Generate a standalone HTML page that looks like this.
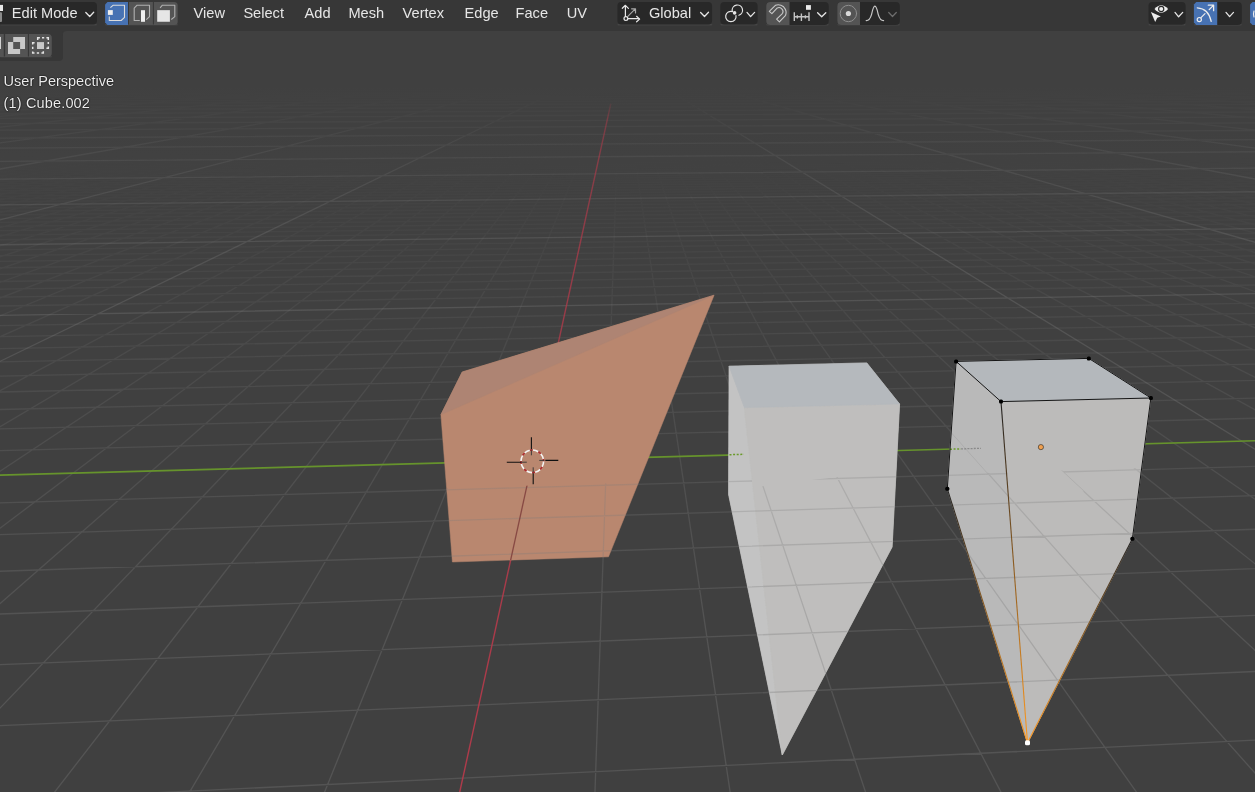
<!DOCTYPE html><html><head><meta charset="utf-8"><style>
html,body{margin:0;padding:0;}
body{width:1255px;height:792px;overflow:hidden;background:#404040;position:relative;font-family:"Liberation Sans",sans-serif;}
#vp{position:absolute;left:0;top:0;}
#hdr{position:absolute;left:0;top:0;width:1255px;height:31px;background:#373737;}
.t{position:absolute;color:#e6e6e6;font-size:14.6px;line-height:14px;white-space:nowrap;transform:translateZ(0);}
#tp{position:absolute;left:0;top:31px;width:63px;height:30px;background:#373737;border-bottom-right-radius:4px;}
.ovl{font-size:14.5px;text-shadow:0 0 1.5px #000,0 0 1px #000;color:#ececec;}

</style></head><body><svg id="vp" width="1255" height="792" viewBox="0 0 1255 792"><defs><linearGradient id="gmin" gradientUnits="userSpaceOnUse" x1="0" y1="40" x2="0" y2="800"><stop offset="0.0000" stop-color="#7a7a7a" stop-opacity="0.000"/><stop offset="0.0066" stop-color="#7a7a7a" stop-opacity="0.000"/><stop offset="0.0132" stop-color="#7a7a7a" stop-opacity="0.000"/><stop offset="0.0197" stop-color="#7a7a7a" stop-opacity="0.000"/><stop offset="0.0263" stop-color="#7a7a7a" stop-opacity="0.000"/><stop offset="0.0329" stop-color="#7a7a7a" stop-opacity="0.000"/><stop offset="0.0395" stop-color="#7a7a7a" stop-opacity="0.000"/><stop offset="0.0461" stop-color="#7a7a7a" stop-opacity="0.000"/><stop offset="0.0526" stop-color="#7a7a7a" stop-opacity="0.000"/><stop offset="0.0592" stop-color="#7a7a7a" stop-opacity="0.000"/><stop offset="0.0658" stop-color="#7a7a7a" stop-opacity="0.000"/><stop offset="0.0724" stop-color="#7a7a7a" stop-opacity="0.000"/><stop offset="0.0789" stop-color="#7a7a7a" stop-opacity="0.000"/><stop offset="0.0855" stop-color="#7a7a7a" stop-opacity="0.000"/><stop offset="0.0921" stop-color="#7a7a7a" stop-opacity="0.000"/><stop offset="0.0987" stop-color="#7a7a7a" stop-opacity="0.000"/><stop offset="0.1053" stop-color="#7a7a7a" stop-opacity="0.000"/><stop offset="0.1118" stop-color="#7a7a7a" stop-opacity="0.000"/><stop offset="0.1184" stop-color="#7a7a7a" stop-opacity="0.000"/><stop offset="0.1250" stop-color="#7a7a7a" stop-opacity="0.003"/><stop offset="0.1316" stop-color="#7a7a7a" stop-opacity="0.007"/><stop offset="0.1382" stop-color="#7a7a7a" stop-opacity="0.010"/><stop offset="0.1447" stop-color="#7a7a7a" stop-opacity="0.014"/><stop offset="0.1513" stop-color="#7a7a7a" stop-opacity="0.017"/><stop offset="0.1579" stop-color="#7a7a7a" stop-opacity="0.020"/><stop offset="0.1645" stop-color="#7a7a7a" stop-opacity="0.024"/><stop offset="0.1711" stop-color="#7a7a7a" stop-opacity="0.027"/><stop offset="0.1776" stop-color="#7a7a7a" stop-opacity="0.031"/><stop offset="0.1842" stop-color="#7a7a7a" stop-opacity="0.035"/><stop offset="0.1908" stop-color="#7a7a7a" stop-opacity="0.039"/><stop offset="0.1974" stop-color="#7a7a7a" stop-opacity="0.043"/><stop offset="0.2039" stop-color="#7a7a7a" stop-opacity="0.047"/><stop offset="0.2105" stop-color="#7a7a7a" stop-opacity="0.051"/><stop offset="0.2171" stop-color="#7a7a7a" stop-opacity="0.056"/><stop offset="0.2237" stop-color="#7a7a7a" stop-opacity="0.061"/><stop offset="0.2303" stop-color="#7a7a7a" stop-opacity="0.066"/><stop offset="0.2368" stop-color="#7a7a7a" stop-opacity="0.071"/><stop offset="0.2434" stop-color="#7a7a7a" stop-opacity="0.077"/><stop offset="0.2500" stop-color="#7a7a7a" stop-opacity="0.082"/><stop offset="0.2566" stop-color="#7a7a7a" stop-opacity="0.087"/><stop offset="0.2632" stop-color="#7a7a7a" stop-opacity="0.092"/><stop offset="0.2697" stop-color="#7a7a7a" stop-opacity="0.096"/><stop offset="0.2763" stop-color="#7a7a7a" stop-opacity="0.100"/><stop offset="0.2829" stop-color="#7a7a7a" stop-opacity="0.105"/><stop offset="0.2895" stop-color="#7a7a7a" stop-opacity="0.109"/><stop offset="0.2961" stop-color="#7a7a7a" stop-opacity="0.113"/><stop offset="0.3026" stop-color="#7a7a7a" stop-opacity="0.117"/><stop offset="0.3092" stop-color="#7a7a7a" stop-opacity="0.122"/><stop offset="0.3158" stop-color="#7a7a7a" stop-opacity="0.126"/><stop offset="0.3224" stop-color="#7a7a7a" stop-opacity="0.130"/><stop offset="0.3289" stop-color="#7a7a7a" stop-opacity="0.134"/><stop offset="0.3355" stop-color="#7a7a7a" stop-opacity="0.139"/><stop offset="0.3421" stop-color="#7a7a7a" stop-opacity="0.143"/><stop offset="0.3487" stop-color="#7a7a7a" stop-opacity="0.146"/><stop offset="0.3553" stop-color="#7a7a7a" stop-opacity="0.150"/><stop offset="0.3618" stop-color="#7a7a7a" stop-opacity="0.154"/><stop offset="0.3684" stop-color="#7a7a7a" stop-opacity="0.157"/><stop offset="0.3750" stop-color="#7a7a7a" stop-opacity="0.161"/><stop offset="0.3816" stop-color="#7a7a7a" stop-opacity="0.164"/><stop offset="0.3882" stop-color="#7a7a7a" stop-opacity="0.168"/><stop offset="0.3947" stop-color="#7a7a7a" stop-opacity="0.171"/><stop offset="0.4013" stop-color="#7a7a7a" stop-opacity="0.175"/><stop offset="0.4079" stop-color="#7a7a7a" stop-opacity="0.179"/><stop offset="0.4145" stop-color="#7a7a7a" stop-opacity="0.182"/><stop offset="0.4211" stop-color="#7a7a7a" stop-opacity="0.186"/><stop offset="0.4276" stop-color="#7a7a7a" stop-opacity="0.189"/><stop offset="0.4342" stop-color="#7a7a7a" stop-opacity="0.193"/><stop offset="0.4408" stop-color="#7a7a7a" stop-opacity="0.196"/><stop offset="0.4474" stop-color="#7a7a7a" stop-opacity="0.200"/><stop offset="0.4539" stop-color="#7a7a7a" stop-opacity="0.203"/><stop offset="0.4605" stop-color="#7a7a7a" stop-opacity="0.207"/><stop offset="0.4671" stop-color="#7a7a7a" stop-opacity="0.211"/><stop offset="0.4737" stop-color="#7a7a7a" stop-opacity="0.214"/><stop offset="0.4803" stop-color="#7a7a7a" stop-opacity="0.217"/><stop offset="0.4868" stop-color="#7a7a7a" stop-opacity="0.220"/><stop offset="0.4934" stop-color="#7a7a7a" stop-opacity="0.223"/><stop offset="0.5000" stop-color="#7a7a7a" stop-opacity="0.226"/><stop offset="0.5066" stop-color="#7a7a7a" stop-opacity="0.229"/><stop offset="0.5132" stop-color="#7a7a7a" stop-opacity="0.232"/><stop offset="0.5197" stop-color="#7a7a7a" stop-opacity="0.234"/><stop offset="0.5263" stop-color="#7a7a7a" stop-opacity="0.237"/><stop offset="0.5329" stop-color="#7a7a7a" stop-opacity="0.240"/><stop offset="0.5395" stop-color="#7a7a7a" stop-opacity="0.243"/><stop offset="0.5461" stop-color="#7a7a7a" stop-opacity="0.246"/><stop offset="0.5526" stop-color="#7a7a7a" stop-opacity="0.249"/><stop offset="0.5592" stop-color="#7a7a7a" stop-opacity="0.252"/><stop offset="0.5658" stop-color="#7a7a7a" stop-opacity="0.255"/><stop offset="0.5724" stop-color="#7a7a7a" stop-opacity="0.258"/><stop offset="0.5789" stop-color="#7a7a7a" stop-opacity="0.260"/><stop offset="0.5855" stop-color="#7a7a7a" stop-opacity="0.263"/><stop offset="0.5921" stop-color="#7a7a7a" stop-opacity="0.266"/><stop offset="0.5987" stop-color="#7a7a7a" stop-opacity="0.269"/><stop offset="0.6053" stop-color="#7a7a7a" stop-opacity="0.272"/><stop offset="0.6118" stop-color="#7a7a7a" stop-opacity="0.274"/><stop offset="0.6184" stop-color="#7a7a7a" stop-opacity="0.277"/><stop offset="0.6250" stop-color="#7a7a7a" stop-opacity="0.279"/><stop offset="0.6316" stop-color="#7a7a7a" stop-opacity="0.281"/><stop offset="0.6382" stop-color="#7a7a7a" stop-opacity="0.283"/><stop offset="0.6447" stop-color="#7a7a7a" stop-opacity="0.286"/><stop offset="0.6513" stop-color="#7a7a7a" stop-opacity="0.288"/><stop offset="0.6579" stop-color="#7a7a7a" stop-opacity="0.290"/><stop offset="0.6645" stop-color="#7a7a7a" stop-opacity="0.292"/><stop offset="0.6711" stop-color="#7a7a7a" stop-opacity="0.295"/><stop offset="0.6776" stop-color="#7a7a7a" stop-opacity="0.297"/><stop offset="0.6842" stop-color="#7a7a7a" stop-opacity="0.299"/><stop offset="0.6908" stop-color="#7a7a7a" stop-opacity="0.301"/><stop offset="0.6974" stop-color="#7a7a7a" stop-opacity="0.304"/><stop offset="0.7039" stop-color="#7a7a7a" stop-opacity="0.306"/><stop offset="0.7105" stop-color="#7a7a7a" stop-opacity="0.308"/><stop offset="0.7171" stop-color="#7a7a7a" stop-opacity="0.311"/><stop offset="0.7237" stop-color="#7a7a7a" stop-opacity="0.313"/><stop offset="0.7303" stop-color="#7a7a7a" stop-opacity="0.315"/><stop offset="0.7368" stop-color="#7a7a7a" stop-opacity="0.317"/><stop offset="0.7434" stop-color="#7a7a7a" stop-opacity="0.320"/><stop offset="0.7500" stop-color="#7a7a7a" stop-opacity="0.322"/><stop offset="0.7566" stop-color="#7a7a7a" stop-opacity="0.324"/><stop offset="0.7632" stop-color="#7a7a7a" stop-opacity="0.326"/><stop offset="0.7697" stop-color="#7a7a7a" stop-opacity="0.329"/><stop offset="0.7763" stop-color="#7a7a7a" stop-opacity="0.331"/><stop offset="0.7829" stop-color="#7a7a7a" stop-opacity="0.333"/><stop offset="0.7895" stop-color="#7a7a7a" stop-opacity="0.335"/><stop offset="0.7961" stop-color="#7a7a7a" stop-opacity="0.338"/><stop offset="0.8026" stop-color="#7a7a7a" stop-opacity="0.340"/><stop offset="0.8092" stop-color="#7a7a7a" stop-opacity="0.340"/><stop offset="0.8158" stop-color="#7a7a7a" stop-opacity="0.340"/><stop offset="0.8224" stop-color="#7a7a7a" stop-opacity="0.340"/><stop offset="0.8289" stop-color="#7a7a7a" stop-opacity="0.340"/><stop offset="0.8355" stop-color="#7a7a7a" stop-opacity="0.340"/><stop offset="0.8421" stop-color="#7a7a7a" stop-opacity="0.340"/><stop offset="0.8487" stop-color="#7a7a7a" stop-opacity="0.340"/><stop offset="0.8553" stop-color="#7a7a7a" stop-opacity="0.340"/><stop offset="0.8618" stop-color="#7a7a7a" stop-opacity="0.340"/><stop offset="0.8684" stop-color="#7a7a7a" stop-opacity="0.340"/><stop offset="0.8750" stop-color="#7a7a7a" stop-opacity="0.340"/><stop offset="0.8816" stop-color="#7a7a7a" stop-opacity="0.340"/><stop offset="0.8882" stop-color="#7a7a7a" stop-opacity="0.340"/><stop offset="0.8947" stop-color="#7a7a7a" stop-opacity="0.340"/><stop offset="0.9013" stop-color="#7a7a7a" stop-opacity="0.340"/><stop offset="0.9079" stop-color="#7a7a7a" stop-opacity="0.340"/><stop offset="0.9145" stop-color="#7a7a7a" stop-opacity="0.340"/><stop offset="0.9211" stop-color="#7a7a7a" stop-opacity="0.340"/><stop offset="0.9276" stop-color="#7a7a7a" stop-opacity="0.340"/><stop offset="0.9342" stop-color="#7a7a7a" stop-opacity="0.340"/><stop offset="0.9408" stop-color="#7a7a7a" stop-opacity="0.340"/><stop offset="0.9474" stop-color="#7a7a7a" stop-opacity="0.340"/><stop offset="0.9539" stop-color="#7a7a7a" stop-opacity="0.340"/><stop offset="0.9605" stop-color="#7a7a7a" stop-opacity="0.340"/><stop offset="0.9671" stop-color="#7a7a7a" stop-opacity="0.340"/><stop offset="0.9737" stop-color="#7a7a7a" stop-opacity="0.340"/><stop offset="0.9803" stop-color="#7a7a7a" stop-opacity="0.340"/><stop offset="0.9868" stop-color="#7a7a7a" stop-opacity="0.340"/><stop offset="0.9934" stop-color="#7a7a7a" stop-opacity="0.340"/></linearGradient><linearGradient id="gmaj" gradientUnits="userSpaceOnUse" x1="0" y1="40" x2="0" y2="800"><stop offset="0.0000" stop-color="#7a7a7a" stop-opacity="0.000"/><stop offset="0.0066" stop-color="#7a7a7a" stop-opacity="0.000"/><stop offset="0.0132" stop-color="#7a7a7a" stop-opacity="0.000"/><stop offset="0.0197" stop-color="#7a7a7a" stop-opacity="0.000"/><stop offset="0.0263" stop-color="#7a7a7a" stop-opacity="0.000"/><stop offset="0.0329" stop-color="#7a7a7a" stop-opacity="0.000"/><stop offset="0.0395" stop-color="#7a7a7a" stop-opacity="0.000"/><stop offset="0.0461" stop-color="#7a7a7a" stop-opacity="0.000"/><stop offset="0.0526" stop-color="#7a7a7a" stop-opacity="0.000"/><stop offset="0.0592" stop-color="#7a7a7a" stop-opacity="0.000"/><stop offset="0.0658" stop-color="#7a7a7a" stop-opacity="0.005"/><stop offset="0.0724" stop-color="#7a7a7a" stop-opacity="0.016"/><stop offset="0.0789" stop-color="#7a7a7a" stop-opacity="0.027"/><stop offset="0.0855" stop-color="#7a7a7a" stop-opacity="0.042"/><stop offset="0.0921" stop-color="#7a7a7a" stop-opacity="0.056"/><stop offset="0.0987" stop-color="#7a7a7a" stop-opacity="0.071"/><stop offset="0.1053" stop-color="#7a7a7a" stop-opacity="0.085"/><stop offset="0.1118" stop-color="#7a7a7a" stop-opacity="0.099"/><stop offset="0.1184" stop-color="#7a7a7a" stop-opacity="0.113"/><stop offset="0.1250" stop-color="#7a7a7a" stop-opacity="0.128"/><stop offset="0.1316" stop-color="#7a7a7a" stop-opacity="0.142"/><stop offset="0.1382" stop-color="#7a7a7a" stop-opacity="0.156"/><stop offset="0.1447" stop-color="#7a7a7a" stop-opacity="0.170"/><stop offset="0.1513" stop-color="#7a7a7a" stop-opacity="0.179"/><stop offset="0.1579" stop-color="#7a7a7a" stop-opacity="0.187"/><stop offset="0.1645" stop-color="#7a7a7a" stop-opacity="0.196"/><stop offset="0.1711" stop-color="#7a7a7a" stop-opacity="0.204"/><stop offset="0.1776" stop-color="#7a7a7a" stop-opacity="0.213"/><stop offset="0.1842" stop-color="#7a7a7a" stop-opacity="0.221"/><stop offset="0.1908" stop-color="#7a7a7a" stop-opacity="0.230"/><stop offset="0.1974" stop-color="#7a7a7a" stop-opacity="0.238"/><stop offset="0.2039" stop-color="#7a7a7a" stop-opacity="0.246"/><stop offset="0.2105" stop-color="#7a7a7a" stop-opacity="0.255"/><stop offset="0.2171" stop-color="#7a7a7a" stop-opacity="0.261"/><stop offset="0.2237" stop-color="#7a7a7a" stop-opacity="0.268"/><stop offset="0.2303" stop-color="#7a7a7a" stop-opacity="0.274"/><stop offset="0.2368" stop-color="#7a7a7a" stop-opacity="0.281"/><stop offset="0.2434" stop-color="#7a7a7a" stop-opacity="0.287"/><stop offset="0.2500" stop-color="#7a7a7a" stop-opacity="0.293"/><stop offset="0.2566" stop-color="#7a7a7a" stop-opacity="0.300"/><stop offset="0.2632" stop-color="#7a7a7a" stop-opacity="0.306"/><stop offset="0.2697" stop-color="#7a7a7a" stop-opacity="0.309"/><stop offset="0.2763" stop-color="#7a7a7a" stop-opacity="0.312"/><stop offset="0.2829" stop-color="#7a7a7a" stop-opacity="0.315"/><stop offset="0.2895" stop-color="#7a7a7a" stop-opacity="0.317"/><stop offset="0.2961" stop-color="#7a7a7a" stop-opacity="0.320"/><stop offset="0.3026" stop-color="#7a7a7a" stop-opacity="0.323"/><stop offset="0.3092" stop-color="#7a7a7a" stop-opacity="0.326"/><stop offset="0.3158" stop-color="#7a7a7a" stop-opacity="0.329"/><stop offset="0.3224" stop-color="#7a7a7a" stop-opacity="0.332"/><stop offset="0.3289" stop-color="#7a7a7a" stop-opacity="0.334"/><stop offset="0.3355" stop-color="#7a7a7a" stop-opacity="0.337"/><stop offset="0.3421" stop-color="#7a7a7a" stop-opacity="0.340"/><stop offset="0.3487" stop-color="#7a7a7a" stop-opacity="0.340"/><stop offset="0.3553" stop-color="#7a7a7a" stop-opacity="0.340"/><stop offset="0.3618" stop-color="#7a7a7a" stop-opacity="0.340"/><stop offset="0.3684" stop-color="#7a7a7a" stop-opacity="0.340"/><stop offset="0.3750" stop-color="#7a7a7a" stop-opacity="0.340"/><stop offset="0.3816" stop-color="#7a7a7a" stop-opacity="0.340"/><stop offset="0.3882" stop-color="#7a7a7a" stop-opacity="0.340"/><stop offset="0.3947" stop-color="#7a7a7a" stop-opacity="0.340"/><stop offset="0.4013" stop-color="#7a7a7a" stop-opacity="0.340"/><stop offset="0.4079" stop-color="#7a7a7a" stop-opacity="0.340"/><stop offset="0.4145" stop-color="#7a7a7a" stop-opacity="0.340"/><stop offset="0.4211" stop-color="#7a7a7a" stop-opacity="0.340"/><stop offset="0.4276" stop-color="#7a7a7a" stop-opacity="0.340"/><stop offset="0.4342" stop-color="#7a7a7a" stop-opacity="0.340"/><stop offset="0.4408" stop-color="#7a7a7a" stop-opacity="0.340"/><stop offset="0.4474" stop-color="#7a7a7a" stop-opacity="0.340"/><stop offset="0.4539" stop-color="#7a7a7a" stop-opacity="0.340"/><stop offset="0.4605" stop-color="#7a7a7a" stop-opacity="0.340"/><stop offset="0.4671" stop-color="#7a7a7a" stop-opacity="0.340"/><stop offset="0.4737" stop-color="#7a7a7a" stop-opacity="0.340"/><stop offset="0.4803" stop-color="#7a7a7a" stop-opacity="0.340"/><stop offset="0.4868" stop-color="#7a7a7a" stop-opacity="0.340"/><stop offset="0.4934" stop-color="#7a7a7a" stop-opacity="0.340"/><stop offset="0.5000" stop-color="#7a7a7a" stop-opacity="0.340"/><stop offset="0.5066" stop-color="#7a7a7a" stop-opacity="0.340"/><stop offset="0.5132" stop-color="#7a7a7a" stop-opacity="0.340"/><stop offset="0.5197" stop-color="#7a7a7a" stop-opacity="0.340"/><stop offset="0.5263" stop-color="#7a7a7a" stop-opacity="0.340"/><stop offset="0.5329" stop-color="#7a7a7a" stop-opacity="0.340"/><stop offset="0.5395" stop-color="#7a7a7a" stop-opacity="0.340"/><stop offset="0.5461" stop-color="#7a7a7a" stop-opacity="0.340"/><stop offset="0.5526" stop-color="#7a7a7a" stop-opacity="0.340"/><stop offset="0.5592" stop-color="#7a7a7a" stop-opacity="0.340"/><stop offset="0.5658" stop-color="#7a7a7a" stop-opacity="0.340"/><stop offset="0.5724" stop-color="#7a7a7a" stop-opacity="0.340"/><stop offset="0.5789" stop-color="#7a7a7a" stop-opacity="0.340"/><stop offset="0.5855" stop-color="#7a7a7a" stop-opacity="0.340"/><stop offset="0.5921" stop-color="#7a7a7a" stop-opacity="0.340"/><stop offset="0.5987" stop-color="#7a7a7a" stop-opacity="0.340"/><stop offset="0.6053" stop-color="#7a7a7a" stop-opacity="0.340"/><stop offset="0.6118" stop-color="#7a7a7a" stop-opacity="0.340"/><stop offset="0.6184" stop-color="#7a7a7a" stop-opacity="0.340"/><stop offset="0.6250" stop-color="#7a7a7a" stop-opacity="0.340"/><stop offset="0.6316" stop-color="#7a7a7a" stop-opacity="0.340"/><stop offset="0.6382" stop-color="#7a7a7a" stop-opacity="0.340"/><stop offset="0.6447" stop-color="#7a7a7a" stop-opacity="0.340"/><stop offset="0.6513" stop-color="#7a7a7a" stop-opacity="0.340"/><stop offset="0.6579" stop-color="#7a7a7a" stop-opacity="0.340"/><stop offset="0.6645" stop-color="#7a7a7a" stop-opacity="0.340"/><stop offset="0.6711" stop-color="#7a7a7a" stop-opacity="0.340"/><stop offset="0.6776" stop-color="#7a7a7a" stop-opacity="0.340"/><stop offset="0.6842" stop-color="#7a7a7a" stop-opacity="0.340"/><stop offset="0.6908" stop-color="#7a7a7a" stop-opacity="0.340"/><stop offset="0.6974" stop-color="#7a7a7a" stop-opacity="0.340"/><stop offset="0.7039" stop-color="#7a7a7a" stop-opacity="0.340"/><stop offset="0.7105" stop-color="#7a7a7a" stop-opacity="0.340"/><stop offset="0.7171" stop-color="#7a7a7a" stop-opacity="0.340"/><stop offset="0.7237" stop-color="#7a7a7a" stop-opacity="0.340"/><stop offset="0.7303" stop-color="#7a7a7a" stop-opacity="0.340"/><stop offset="0.7368" stop-color="#7a7a7a" stop-opacity="0.340"/><stop offset="0.7434" stop-color="#7a7a7a" stop-opacity="0.340"/><stop offset="0.7500" stop-color="#7a7a7a" stop-opacity="0.340"/><stop offset="0.7566" stop-color="#7a7a7a" stop-opacity="0.340"/><stop offset="0.7632" stop-color="#7a7a7a" stop-opacity="0.340"/><stop offset="0.7697" stop-color="#7a7a7a" stop-opacity="0.340"/><stop offset="0.7763" stop-color="#7a7a7a" stop-opacity="0.340"/><stop offset="0.7829" stop-color="#7a7a7a" stop-opacity="0.340"/><stop offset="0.7895" stop-color="#7a7a7a" stop-opacity="0.340"/><stop offset="0.7961" stop-color="#7a7a7a" stop-opacity="0.340"/><stop offset="0.8026" stop-color="#7a7a7a" stop-opacity="0.340"/><stop offset="0.8092" stop-color="#7a7a7a" stop-opacity="0.340"/><stop offset="0.8158" stop-color="#7a7a7a" stop-opacity="0.340"/><stop offset="0.8224" stop-color="#7a7a7a" stop-opacity="0.340"/><stop offset="0.8289" stop-color="#7a7a7a" stop-opacity="0.340"/><stop offset="0.8355" stop-color="#7a7a7a" stop-opacity="0.340"/><stop offset="0.8421" stop-color="#7a7a7a" stop-opacity="0.340"/><stop offset="0.8487" stop-color="#7a7a7a" stop-opacity="0.340"/><stop offset="0.8553" stop-color="#7a7a7a" stop-opacity="0.340"/><stop offset="0.8618" stop-color="#7a7a7a" stop-opacity="0.340"/><stop offset="0.8684" stop-color="#7a7a7a" stop-opacity="0.340"/><stop offset="0.8750" stop-color="#7a7a7a" stop-opacity="0.340"/><stop offset="0.8816" stop-color="#7a7a7a" stop-opacity="0.340"/><stop offset="0.8882" stop-color="#7a7a7a" stop-opacity="0.340"/><stop offset="0.8947" stop-color="#7a7a7a" stop-opacity="0.340"/><stop offset="0.9013" stop-color="#7a7a7a" stop-opacity="0.340"/><stop offset="0.9079" stop-color="#7a7a7a" stop-opacity="0.340"/><stop offset="0.9145" stop-color="#7a7a7a" stop-opacity="0.340"/><stop offset="0.9211" stop-color="#7a7a7a" stop-opacity="0.340"/><stop offset="0.9276" stop-color="#7a7a7a" stop-opacity="0.340"/><stop offset="0.9342" stop-color="#7a7a7a" stop-opacity="0.340"/><stop offset="0.9408" stop-color="#7a7a7a" stop-opacity="0.340"/><stop offset="0.9474" stop-color="#7a7a7a" stop-opacity="0.340"/><stop offset="0.9539" stop-color="#7a7a7a" stop-opacity="0.340"/><stop offset="0.9605" stop-color="#7a7a7a" stop-opacity="0.340"/><stop offset="0.9671" stop-color="#7a7a7a" stop-opacity="0.340"/><stop offset="0.9737" stop-color="#7a7a7a" stop-opacity="0.340"/><stop offset="0.9803" stop-color="#7a7a7a" stop-opacity="0.340"/><stop offset="0.9868" stop-color="#7a7a7a" stop-opacity="0.340"/><stop offset="0.9934" stop-color="#7a7a7a" stop-opacity="0.340"/></linearGradient><clipPath id="cOr"><polygon points="462.2,372 714.1,295.2 608.5,556.8 452.4,562 440.9,414.7"/></clipPath><clipPath id="gOr"><polygon points="-10,501.4 1265,464.4 1265,800 -10,800"/></clipPath><clipPath id="cMid"><polygon points="729.1,366.2 866.8,362.9 899.6,404 892.1,547 782.3,755 728.6,494.4"/></clipPath><clipPath id="gMidA"><polygon points="700,478 752,476 752,800 700,800"/></clipPath><clipPath id="gMidB"><polygon points="752,487.5 818,479.2 905,470 905,800 752,800"/></clipPath><clipPath id="cR"><polygon points="956.1,361.4 1088.8,358.4 1150.9,398 1132.4,538.7 1027.5,742.8 947.3,488.8"/></clipPath><clipPath id="gRA"><polygon points="900,300 897.8,372.1 987.1,472.4 900,475"/></clipPath><clipPath id="gRB"><polygon points="1061.2,470.3 1420.6,459.9 1461,480.1 1084,491.5"/></clipPath><clipPath id="gRC"><polygon points="-10,524.9 1265,486 1265,800 -10,800"/></clipPath><clipPath id="gRD"><polygon points="900,475 1007.1,471.9 1008.8,494 900,497.2"/></clipPath></defs><defs><g id="gl"><path d="M-5 77.4L1260 74.4M-5 77.4L1260 74.4M-5 77.4L1260 74.5M-5 77.5L1260 74.5M-5 77.5L1260 74.5M-5 77.6L1260 74.6M-5 77.6L1260 74.6M-5 77.6L1260 74.6M-5 77.7L1260 74.7M-5 77.8L1260 74.7M-5 77.8L1260 74.8M-5 77.8L1260 74.8M-5 77.9L1260 74.9M-5 77.9L1260 74.9M-5 78L1260 74.9M-5 78L1260 75M-5 78L1260 75M-5 78.1L1260 75M-5 78.2L1260 75.1M-5 78.2L1260 75.2M-5 78.3L1260 75.2M-5 78.3L1260 75.2M-5 78.3L1260 75.3M-5 78.4L1260 75.3M-5 78.4L1260 75.4M-5 78.5L1260 75.4M-5 78.5L1260 75.4M-5 78.6L1260 75.5M-5 78.6L1260 75.6M-5 78.7L1260 75.6M-5 78.7L1260 75.6M-5 78.8L1260 75.7M-5 78.8L1260 75.7M-5 78.9L1260 75.8M-5 78.9L1260 75.8M-5 79L1260 75.9M-5 79.1L1260 75.9M-5 79.1L1260 76M-5 79.2L1260 76M-5 79.2L1260 76.1M-5 79.3L1260 76.1M-5 79.3L1260 76.2M-5 79.3L1260 76.2M-5 79.4L1260 76.2M-5 79.4L1260 76.3M-5 79.5L1260 76.4M-5 79.6L1260 76.4M-5 79.6L1260 76.5M-5 79.7L1260 76.5M-5 79.7L1260 76.6M-5 79.8L1260 76.6M-5 79.8L1260 76.7M-5 79.9L1260 76.7M-5 79.9L1260 76.8M-5 80.1L1260 76.9M-5 80.1L1260 76.9M-5 80.2L1260 76.9M-5 80.2L1260 77M-5 80.3L1260 77M-5 80.3L1260 77.1M-5 80.4L1260 77.1M-5 80.4L1260 77.2M-5 80.5L1260 77.2M-5 80.6L1260 77.3M-5 80.6L1260 77.4M-5 80.7L1260 77.4M-5 80.8L1260 77.5M-5 80.8L1260 77.6M-5 80.9L1260 77.6M-5 80.9L1260 77.7M-5 81L1260 77.7M-5 81L1260 77.8M-5 81.2L1260 77.9M-5 81.2L1260 77.9M-5 81.3L1260 78M-5 81.3L1260 78M-5 81.4L1260 78.1M-5 81.5L1260 78.1M-5 81.5L1260 78.2M-5 81.6L1260 78.3M-5 81.6L1260 78.3M-5 81.8L1260 78.4M-5 81.8L1260 78.5M-5 81.9L1260 78.5M-5 82L1260 78.6M-5 82L1260 78.7M-5 82.1L1260 78.7M-5 82.1L1260 78.8M-5 82.2L1260 78.8M-5 82.3L1260 78.9M-5 82.4L1260 79M-5 82.5L1260 79.1M-5 82.5L1260 79.1M-5 82.6L1260 79.2M-5 82.7L1260 79.3M-5 82.7L1260 79.3M-5 82.8L1260 79.4M-5 82.9L1260 79.5M-5 83L1260 79.5M-5 83.1L1260 79.6M-5 83.2L1260 79.7M-5 83.2L1260 79.8M-5 83.3L1260 79.8M-5 83.4L1260 79.9M-5 83.5L1260 80M-5 83.5L1260 80M-5 83.6L1260 80.1M-5 83.7L1260 80.2M-5 83.8L1260 80.3M-5 83.9L1260 80.4M-5 84L1260 80.5M-5 84.1L1260 80.5M-5 84.1L1260 80.6M-5 84.2L1260 80.7M-5 84.3L1260 80.7M-5 84.4L1260 80.8M-5 84.4L1260 80.9M-5 84.6L1260 81M-5 84.7L1260 81.1M-5 84.8L1260 81.2M-5 84.9L1260 81.3M-5 84.9L1260 81.3M-5 85L1260 81.4M-5 85.1L1260 81.5M-5 85.2L1260 81.6M-5 85.3L1260 81.7M-5 85.4L1260 81.8M-5 85.5L1260 81.9M-5 85.6L1260 82M-5 85.7L1260 82.1M-5 85.8L1260 82.1M-5 85.9L1260 82.2M-5 86L1260 82.3M-5 86.1L1260 82.4M-5 86.2L1260 82.5M-5 86.4L1260 82.6M-5 86.4L1260 82.7M-5 86.5L1260 82.8M-5 86.6L1260 82.9M-5 86.7L1260 83M-5 86.8L1260 83.1M-5 86.9L1260 83.2M-5 87L1260 83.3M-5 87.1L1260 83.4M-5 87.3L1260 83.5M-5 87.4L1260 83.6M-5 87.5L1260 83.7M-5 87.6L1260 83.8M-5 87.7L1260 83.9M-5 87.8L1260 84M-5 87.9L1260 84.1M-5 88.1L1260 84.2M-5 88.2L1260 84.3M-5 88.4L1260 84.5M-5 88.5L1260 84.6M-5 88.6L1260 84.7M-5 88.7L1260 84.8M-5 88.8L1260 84.9M-5 88.9L1260 85M-5 89.1L1260 85.1M-5 89.2L1260 85.2M-5 89.3L1260 85.4M-5 89.5L1260 85.6M-5 89.6L1260 85.7M-5 89.8L1260 85.8M-5 89.9L1260 85.9M-5 90L1260 86M-5 90.1L1260 86.1M-5 90.3L1260 86.2M-5 90.4L1260 86.4M-5 90.5L1260 86.5M-5 90.8L1260 86.7M-5 90.9L1260 86.8M-5 91L1260 87M-5 91.2L1260 87.1M-5 91.3L1260 87.2M-5 91.4L1260 87.3M-5 91.6L1260 87.5M-5 91.7L1260 87.6M-5 91.8L1260 87.7M-5 92.1L1260 88M-5 92.3L1260 88.1M-5 92.4L1260 88.2M-5 92.6L1260 88.4M-5 92.7L1260 88.5M-5 92.9L1260 88.6M-5 93L1260 88.8M-5 93.2L1260 88.9M-5 93.3L1260 89.1M-5 93.6L1260 89.3M-5 93.8L1260 89.5M-5 93.9L1260 89.6M-5 94.1L1260 89.8M-5 94.3L1260 89.9M-5 94.4L1260 90.1M-5 94.6L1260 90.2M-5 94.8L1260 90.4M-5 94.9L1260 90.5M-5 95.3L1260 90.9M-5 95.4L1260 91M-5 95.6L1260 91.2M-5 95.8L1260 91.3M-5 96L1260 91.5M-5 96.2L1260 91.7M-5 96.3L1260 91.8M-5 96.5L1260 92M-5 96.7L1260 92.2M-5 97.1L1260 92.5M-5 97.3L1260 92.7M-5 97.5L1260 92.9M-5 97.7L1260 93.1M-5 97.9L1260 93.3M-5 98.1L1260 93.5M-5 98.3L1260 93.6M-5 98.5L1260 93.8M-5 98.7L1260 94M-5 99.1L1260 94.4M-5 99.4L1260 94.6M-5 99.6L1260 94.8M-5 99.8L1260 95M-5 100L1260 95.2M-5 100.2L1260 95.4M-5 100.5L1260 95.6M-5 100.7L1260 95.9M-5 100.9L1260 96.1M-5 101.4L1260 96.5M-5 101.7L1260 96.7M-5 101.9L1260 97M-5 102.2L1260 97.2M-5 102.4L1260 97.4M-5 102.7L1260 97.7M-5 102.9L1260 97.9M-5 103.2L1260 98.1M-5 103.5L1260 98.4M-5 104L1260 98.9M-5 104.3L1260 99.1M-5 104.5L1260 99.4M-5 104.8L1260 99.7M-5 105.1L1260 99.9M-5 105.4L1260 100.2M-5 105.7L1260 100.5M-5 106L1260 100.7M-5 106.3L1260 101M-5 106.9L1260 101.6M-5 107.2L1260 101.9M-5 107.6L1260 102.2M-5 107.9L1260 102.5M-5 108.2L1260 102.8M-5 108.5L1260 103.1M-5 108.9L1260 103.4M-5 109.2L1260 103.7M-5 109.6L1260 104M-5 110.3L1260 104.7M-5 110.7L1260 105M-5 111L1260 105.4M-5 111.4L1260 105.7M-5 111.8L1260 106.1M-5 112.2L1260 106.4M-5 112.6L1260 106.8M-5 113L1260 107.1M-5 113.4L1260 107.5M-5 114.2L1260 108.3M-5 114.6L1260 108.7M-5 115.1L1260 109.1M-5 115.5L1260 109.5M-5 115.9L1260 109.9M-5 116.4L1260 110.3M-5 116.9L1260 110.7M-5 117.3L1260 111.2M-5 117.8L1260 111.6M-5 118.8L1260 112.5M-5 119.3L1260 113M-5 119.8L1260 113.4M-5 120.3L1260 113.9M-5 120.8L1260 114.4M-5 121.4L1260 114.9M-5 121.9L1260 115.4M-5 122.5L1260 115.9M-5 123.1L1260 116.4M-5 124.2L1260 117.5M-5 124.8L1260 118.1M-5 125.5L1260 118.6M-5 126.1L1260 119.2M-5 126.7L1260 119.8M-5 127.4L1260 120.4M-5 128L1260 121M-5 128.7L1260 121.7M-5 129.4L1260 122.3M-5 130.9L1260 123.6M-5 131.6L1260 124.3M-5 132.3L1260 125M-5 133.1L1260 125.7M-5 133.9L1260 126.4M-5 134.7L1260 127.2M-5 135.5L1260 127.9M-5 136.4L1260 128.7M-5 137.2L1260 129.5M-5 139L1260 131.1M-5 139.9L1260 132M-5 140.9L1260 132.8M-5 141.9L1260 133.7M-5 142.8L1260 134.7M-5 143.9L1260 135.6M-5 144.9L1260 136.6M-5 146L1260 137.5M-5 147.1L1260 138.5M-5 149.4L1260 140.7M-5 150.6L1260 141.7M-5 151.8L1260 142.9M-5 153L1260 144M-5 154.3L1260 145.2M-5 155.6L1260 146.4M-5 157L1260 147.7M-5 158.4L1260 149M-5 159.9L1260 150.3M-5 162.9L1260 153.1M-5 164.5L1260 154.6M-5 166.1L1260 156.1M-5 167.8L1260 157.6M-5 169.6L1260 159.2M-5 171.4L1260 160.9M-5 173.2L1260 162.6M-5 175.2L1260 164.4M-5 177.2L1260 166.2M-5 181.4L1260 170.1M-5 183.6L1260 172.2M-5 185.9L1260 174.3M-5 188.3L1260 176.5M-5 190.8L1260 178.8M-5 193.4L1260 181.2M-5 196.1L1260 183.6M-5 198.9L1260 186.2M-5 201.8L1260 188.9M-5 208.1L1260 194.7M-5 211.4L1260 197.7M-5 214.9L1260 201M-5 218.6L1260 204.3M-5 222.4L1260 207.9M-5 226.4L1260 211.6M-5 230.7L1260 215.5M-5 235.1L1260 219.6M-5 239.8L1260 223.9M-5 250L1260 233.3M-5 255.6L1260 238.4M-5 261.5L1260 243.9M-5 267.8L1260 249.6M-5 274.4L1260 255.8M-5 281.6L1260 262.3M-5 289.2L1260 269.3M-5 297.3L1260 276.9M-5 306.1L1260 284.9M-5 325.7L1260 303M-5 336.8L1260 313.2M-5 348.8L1260 324.2M-5 361.9L1260 336.3M-5 376.3L1260 349.5M-5 392.1L1260 364.1M-5 409.6L1260 380.2M-5 429L1260 398.1M-5 450.8L1260 418.1M-5 503L1260 466.2M-5 534.7L1260 495.4M-5 571.4L1260 529.1M-5 614.2L1260 568.5M-5 664.9L1260 615.2M-5 725.8L1260 671.3M66.3 797L1260 739.9M384.6 64.2L-5 70M385.2 64.2L-5 70M385.8 64.2L-5 70M386.4 64.2L-5 70M387 64.2L-5 70M387.6 64.2L-5 70.1M388.2 64.2L-5 70.1M388.8 64.2L-5 70.1M389.4 64.2L-5 70.1M390.6 64.2L-5 70.2M391.2 64.1L-5 70.2M391.8 64.1L-5 70.2M392.4 64.1L-5 70.2M393 64.1L-5 70.3M393.6 64.1L-5 70.3M394.2 64.1L-5 70.3M394.8 64.1L-5 70.3M395.4 64.1L-5 70.4M396.6 64.1L-5 70.4M397.2 64.1L-5 70.4M397.8 64.1L-5 70.4M398.4 64.1L-5 70.5M399 64.1L-5 70.5M399.6 64.1L-5 70.5M400.2 64.1L-5 70.5M400.8 64.1L-5 70.6M401.4 64.1L-5 70.6M402.5 64.1L-5 70.6M403.1 64.1L-5 70.7M403.7 64.1L-5 70.7M404.3 64.1L-5 70.7M404.9 64.1L-5 70.7M405.5 64.1L-5 70.8M406.1 64.1L-5 70.8M406.7 64.1L-5 70.8M407.3 64.1L-5 70.8M408.5 64.1L-5 70.9M409.1 64.1L-5 70.9M409.7 64.1L-5 70.9M410.3 64.1L-5 71M410.9 64.1L-5 71M411.5 64.1L-5 71M412.1 64.1L-5 71.1M412.7 64.1L-5 71.1M413.3 64.1L-5 71.1M414.5 64.1L-5 71.2M415.1 64.1L-5 71.2M415.7 64.1L-5 71.2M416.3 64.1L-5 71.2M416.8 64.1L-5 71.3M417.4 64.1L-5 71.3M418 64.1L-5 71.3M418.6 64.1L-5 71.4M419.2 64.1L-5 71.4M420.4 64.1L-5 71.4M421 64.1L-5 71.5M421.6 64.1L-5 71.5M422.2 64.1L-5 71.5M422.8 64.1L-5 71.6M423.4 64.1L-5 71.6M424 64.1L-5 71.6M424.6 64.1L-5 71.7M425.2 64.1L-5 71.7M426.4 64.1L-5 71.7M427 64.1L-5 71.8M427.6 64.1L-5 71.8M428.2 64.1L-5 71.8M428.7 64.1L-5 71.9M429.3 64.1L-5 71.9M429.9 64.1L-5 71.9M430.5 64.1L-5 72M431.1 64.1L-5 72M432.3 64.1L-5 72.1M432.9 64.1L-5 72.1M433.5 64.1L-5 72.1M434.1 64.1L-5 72.2M434.7 64.1L-5 72.2M435.3 64.1L-5 72.2M435.9 64.1L-5 72.3M436.5 64.1L-5 72.3M437.1 64.1L-5 72.3M438.3 64.1L-5 72.4M438.8 64.1L-5 72.4M439.4 64.1L-5 72.5M440 64.1L-5 72.5M440.6 64.1L-5 72.6M441.2 64.1L-5 72.6M441.8 64.1L-5 72.6M442.4 64.1L-5 72.7M443 64.1L-5 72.7M444.2 64.1L-5 72.8M444.8 64.1L-5 72.8M445.4 64.1L-5 72.8M446 64.1L-5 72.9M446.6 64.1L-5 72.9M447.2 64.1L-5 73M447.7 64.1L-5 73M448.3 64.1L-5 73M448.9 64.1L-5 73.1M450.1 64.1L-5 73.2M450.7 64.1L-5 73.2M451.3 64.1L-5 73.2M451.9 64.1L-5 73.3M452.5 64.1L-5 73.3M453.1 64.1L-5 73.4M453.7 64.1L-5 73.4M454.3 64.1L-5 73.4M454.9 64L-5 73.5M456 64L-5 73.6M456.6 64L-5 73.6M457.2 64L-5 73.7M457.8 64L-5 73.7M458.4 64L-5 73.8M459 64L-5 73.8M459.6 64L-5 73.8M460.2 64L-5 73.9M460.8 64L-5 73.9M462 64L-5 74M462.6 64L-5 74.1M463.2 64L-5 74.1M463.7 64L-5 74.2M464.3 64L-5 74.2M464.9 64L-5 74.3M465.5 64L-5 74.3M466.1 64L-5 74.4M466.7 64L-5 74.4M467.9 64L-5 74.5M468.5 64L-5 74.6M469.1 64L-5 74.6M469.7 64L-5 74.7M470.2 64L-5 74.7M470.8 64L-5 74.8M471.4 64L-5 74.8M472 64L-5 74.9M472.6 64L-5 74.9M473.8 64L-5 75M474.4 64L-5 75.1M475 64L-5 75.1M475.6 64L-5 75.2M476.2 64L-5 75.2M476.8 64L-5 75.3M477.3 64L-5 75.4M477.9 64L-5 75.4M478.5 64L-5 75.5M479.7 64L-5 75.6M480.3 64L-5 75.6M480.9 64L-5 75.7M481.5 64L-5 75.8M482.1 64L-5 75.8M482.7 64L-5 75.9M483.2 64L-5 75.9M483.8 64L-5 76M484.4 64L-5 76.1M485.6 64L-5 76.2M486.2 64L-5 76.3M486.8 64L-5 76.3M487.4 64L-5 76.4M488 64L-5 76.5M488.6 64L-5 76.5M489.1 64L-5 76.6M489.7 64L-5 76.7M490.3 64L-5 76.7M491.5 64L-5 76.9M492.1 64L-5 76.9M492.7 64L-5 77M493.3 64L-5 77.1M493.9 64L-5 77.1M494.5 64L-5 77.2M495 64L-5 77.3M495.6 64L-5 77.4M496.2 64L-5 77.4M497.4 64L-5 77.6M498 64L-5 77.7M498.6 64L-5 77.8M499.2 64L-5 77.8M499.8 64L-5 77.9M500.3 64L-5 78M500.9 64L-5 78.1M501.5 64L-5 78.2M502.1 64L-5 78.2M503.3 64L-5 78.4M503.9 64L-5 78.5M504.5 64L-5 78.6M505.1 64L-5 78.7M505.6 64L-5 78.7M506.2 64L-5 78.8M506.8 64L-5 78.9M507.4 64L-5 79M508 64L-5 79.1M509.2 64L-5 79.3M509.8 64L-5 79.4M510.4 64L-5 79.5M510.9 64L-5 79.6M511.5 64L-5 79.7M512.1 64L-5 79.8M512.7 64L-5 79.9M513.3 64L-5 80M513.9 64L-5 80.1M515.1 64L-5 80.3M515.6 64L-5 80.4M516.2 64L-5 80.5M516.8 64L-5 80.6M517.4 64L-5 80.7M518 64L-5 80.8M518.6 63.9L-5 80.9M519.2 63.9L-5 81M519.8 63.9L-5 81.1M520.9 63.9L-5 81.4M521.5 63.9L-5 81.5M522.1 63.9L-5 81.6M522.7 63.9L-5 81.7M523.3 63.9L-5 81.9M523.9 63.9L-5 82M524.5 63.9L-5 82.1M525 63.9L-5 82.2M525.6 63.9L-5 82.4M526.8 63.9L-5 82.6M527.4 63.9L-5 82.8M528 63.9L-5 82.9M528.6 63.9L-5 83M529.2 63.9L-5 83.2M529.7 63.9L-5 83.3M530.3 63.9L-5 83.4M530.9 63.9L-5 83.6M531.5 63.9L-5 83.7M532.7 63.9L-5 84M533.3 63.9L-5 84.2M533.8 63.9L-5 84.3M534.4 63.9L-5 84.5M535 63.9L-5 84.6M535.6 63.9L-5 84.8M536.2 63.9L-5 85M536.8 63.9L-5 85.1M537.4 63.9L-5 85.3M538.5 63.9L-5 85.6M539.1 63.9L-5 85.8M539.7 63.9L-5 86M540.3 63.9L-5 86.2M540.9 63.9L-5 86.3M541.5 63.9L-5 86.5M542.1 63.9L-5 86.7M542.6 63.9L-5 86.9M543.2 63.9L-5 87.1M544.4 63.9L-5 87.5M545 63.9L-5 87.7M545.6 63.9L-5 87.9M546.2 63.9L-5 88.1M546.7 63.9L-5 88.3M547.3 63.9L-5 88.5M547.9 63.9L-5 88.7M548.5 63.9L-5 89M549.1 63.9L-5 89.2M550.3 63.9L-5 89.6M550.8 63.9L-5 89.9M551.4 63.9L-5 90.1M552 63.9L-5 90.4M552.6 63.9L-5 90.6M553.2 63.9L-5 90.9M553.8 63.9L-5 91.1M554.3 63.9L-5 91.4M554.9 63.9L-5 91.7M556.1 63.9L-5 92.2M556.7 63.9L-5 92.5M557.3 63.9L-5 92.8M557.9 63.9L-5 93.1M558.4 63.9L-5 93.4M559 63.9L-5 93.7M559.6 63.9L-5 94M560.2 63.9L-5 94.3M560.8 63.9L-5 94.6M561.9 63.9L-5 95.3M562.5 63.9L-5 95.6M563.1 63.9L-5 95.9M563.7 63.9L-5 96.3M564.3 63.9L-5 96.7M564.9 63.9L-5 97M565.5 63.9L-5 97.4M566 63.9L-5 97.8M566.6 63.9L-5 98.2M567.8 63.9L-5 99M568.4 63.9L-5 99.4M569 63.9L-5 99.9M569.5 63.9L-5 100.3M570.1 63.9L-5 100.7M570.7 63.9L-5 101.2M571.3 63.9L-5 101.7M571.9 63.9L-5 102.2M572.5 63.9L-5 102.7M573.6 63.9L-5 103.7M574.2 63.9L-5 104.2M574.8 63.9L-5 104.8M575.4 63.9L-5 105.3M576 63.9L-5 105.9M576.5 63.9L-5 106.5M577.1 63.9L-5 107.1M577.7 63.9L-5 107.7M578.3 63.9L-5 108.4M579.5 63.9L-5 109.7M580 63.9L-5 110.4M580.6 63.9L-5 111.1M581.2 63.9L-5 111.8M581.8 63.9L-5 112.6M582.4 63.8L-5 113.4M583 63.8L-5 114.2M583.5 63.8L-5 115M584.1 63.8L-5 115.9M585.3 63.8L-5 117.7M585.9 63.8L-5 118.6M586.4 63.8L-5 119.6M587 63.8L-5 120.6M587.6 63.8L-5 121.7M588.2 63.8L-5 122.8M588.8 63.8L-5 123.9M589.4 63.8L-5 125.1M589.9 63.8L-5 126.3M591.1 63.8L-5 128.9M591.7 63.8L-5 130.3M592.3 63.8L-5 131.7M592.9 63.8L-5 133.2M593.4 63.8L-5 134.7M594 63.8L-5 136.3M594.6 63.8L-5 138M595.2 63.8L-5 139.8M595.8 63.8L-5 141.7M596.9 63.8L-5 145.7M597.5 63.8L-5 147.8M598.1 63.8L-5 150.1M598.7 63.8L-5 152.4M599.3 63.8L-5 155M599.8 63.8L-5 157.6M600.4 63.8L-5 160.4M601 63.8L-5 163.4M601.6 63.8L-5 166.6M602.7 63.8L-5 173.5M603.3 63.8L-5 177.4M603.9 63.8L-5 181.5M604.5 63.8L-5 185.9M605.1 63.8L-5 190.6M605.6 63.8L-5 195.8M606.2 63.8L-5 201.3M606.8 63.8L-5 207.4M607.4 63.8L-5 213.9M608.6 63.8L-5 229M609.1 63.8L-5 237.8M609.7 63.8L-5 247.4M610.3 63.8L-5 258.3M610.9 63.8L-5 270.4M611.5 63.8L-5 284.2M612 63.8L-5 299.9M612.6 63.8L-5 317.9M613.2 63.8L-5 339M614.4 63.8L-5 393.5M614.9 63.8L-5 429.6M615.5 63.8L-5 474.6M616.1 63.8L-5 532M616.7 63.8L-5 608.1M617.3 63.8L-5 713.4M617.8 63.8L50.8 797M618.4 63.8L186.7 797M619 63.8L322.6 797M620.2 63.8L594.8 797M620.7 63.8L730.9 797M621.3 63.8L867.2 797M621.9 63.8L1003.5 797M622.5 63.8L1139.9 797M623.1 63.8L1260 778.7M623.6 63.8L1260 655M624.2 63.8L1260 567.7M624.8 63.8L1260 502.7M626 63.8L1260 412.4M626.5 63.8L1260 379.8M627.1 63.8L1260 352.7M627.7 63.8L1260 329.8M628.3 63.8L1260 310.3M628.9 63.8L1260 293.4M629.4 63.8L1260 278.6M630 63.8L1260 265.6M630.6 63.8L1260 254M631.7 63.8L1260 234.4M632.3 63.8L1260 226M632.9 63.8L1260 218.4M633.5 63.8L1260 211.5M634.1 63.8L1260 205.1M634.6 63.8L1260 199.2M635.2 63.8L1260 193.8M635.8 63.8L1260 188.8M636.4 63.8L1260 184.2M637.5 63.8L1260 175.8M638.1 63.8L1260 172.1M638.7 63.8L1260 168.5M639.3 63.8L1260 165.2M639.8 63.8L1260 162.1M640.4 63.8L1260 159.2M641 63.8L1260 156.4M641.6 63.8L1260 153.8M642.2 63.8L1260 151.3M643.3 63.8L1260 146.7M643.9 63.8L1260 144.6M644.5 63.8L1260 142.5M645.1 63.8L1260 140.6M645.6 63.8L1260 138.8M646.2 63.7L1260 137M646.8 63.7L1260 135.3M647.4 63.7L1260 133.7M647.9 63.7L1260 132.1M649.1 63.7L1260 129.2M649.7 63.7L1260 127.9M650.3 63.7L1260 126.6M650.8 63.7L1260 125.3M651.4 63.7L1260 124.1M652 63.7L1260 122.9M652.6 63.7L1260 121.8M653.1 63.7L1260 120.7M653.7 63.7L1260 119.6M654.9 63.7L1260 117.6M655.4 63.7L1260 116.7M656 63.7L1260 115.8M656.6 63.7L1260 114.9M657.2 63.7L1260 114M657.8 63.7L1260 113.2M658.3 63.7L1260 112.4M658.9 63.7L1260 111.6M659.5 63.7L1260 110.8M660.6 63.7L1260 109.3M661.2 63.7L1260 108.6M661.8 63.7L1260 108M662.4 63.7L1260 107.3M662.9 63.7L1260 106.7M663.5 63.7L1260 106M664.1 63.7L1260 105.4M664.7 63.7L1260 104.8M665.3 63.7L1260 104.2M666.4 63.7L1260 103.1M667 63.7L1260 102.6M667.6 63.7L1260 102.1M668.1 63.7L1260 101.6M668.7 63.7L1260 101.1M669.3 63.7L1260 100.6M669.9 63.7L1260 100.1M670.4 63.7L1260 99.6M671 63.7L1260 99.2M672.2 63.7L1260 98.3M672.7 63.7L1260 97.9M673.3 63.7L1260 97.5M673.9 63.7L1260 97.1M674.5 63.7L1260 96.7M675 63.7L1260 96.3M675.6 63.7L1260 95.9M676.2 63.7L1260 95.5M676.8 63.7L1260 95.2M677.9 63.7L1260 94.4M678.5 63.7L1260 94.1M679.1 63.7L1260 93.8M679.7 63.7L1260 93.4M680.2 63.7L1260 93.1M680.8 63.7L1260 92.8M681.4 63.7L1260 92.5M682 63.7L1260 92.2M682.5 63.7L1260 91.9M683.7 63.7L1260 91.3M684.3 63.7L1260 91M684.8 63.7L1260 90.7M685.4 63.7L1260 90.5M686 63.7L1260 90.2M686.6 63.7L1260 89.9M687.1 63.7L1260 89.7M687.7 63.7L1260 89.4M688.3 63.7L1260 89.2M689.4 63.7L1260 88.7M690 63.7L1260 88.4M690.6 63.7L1260 88.2M691.2 63.7L1260 88M691.7 63.7L1260 87.7M692.3 63.7L1260 87.5M692.9 63.7L1260 87.3M693.4 63.7L1260 87.1M694 63.7L1260 86.9M695.2 63.7L1260 86.4M695.7 63.7L1260 86.2M696.3 63.7L1260 86M696.9 63.7L1260 85.8M697.5 63.7L1260 85.6M698 63.7L1260 85.4M698.6 63.7L1260 85.3M699.2 63.7L1260 85.1M699.8 63.7L1260 84.9M700.9 63.7L1260 84.5M701.5 63.7L1260 84.4M702.1 63.7L1260 84.2M702.6 63.7L1260 84M703.2 63.7L1260 83.8M703.8 63.7L1260 83.7M704.4 63.7L1260 83.5M704.9 63.7L1260 83.3M705.5 63.7L1260 83.2M706.6 63.7L1260 82.9M707.2 63.7L1260 82.7M707.8 63.7L1260 82.6M708.4 63.7L1260 82.4M708.9 63.7L1260 82.3M709.5 63.7L1260 82.1M710.1 63.6L1260 82M710.7 63.6L1260 81.8M711.2 63.6L1260 81.7M712.4 63.6L1260 81.4M713 63.6L1260 81.3M713.5 63.6L1260 81.2M714.1 63.6L1260 81M714.7 63.6L1260 80.9M715.2 63.6L1260 80.8M715.8 63.6L1260 80.6M716.4 63.6L1260 80.5M717 63.6L1260 80.4M718.1 63.6L1260 80.2M718.7 63.6L1260 80M719.3 63.6L1260 79.9M719.8 63.6L1260 79.8M720.4 63.6L1260 79.7M721 63.6L1260 79.6M721.5 63.6L1260 79.5M722.1 63.6L1260 79.4M722.7 63.6L1260 79.2M723.8 63.6L1260 79M724.4 63.6L1260 78.9M725 63.6L1260 78.8M725.5 63.6L1260 78.7M726.1 63.6L1260 78.6M726.7 63.6L1260 78.5M727.3 63.6L1260 78.4M727.8 63.6L1260 78.3M728.4 63.6L1260 78.2M729.5 63.6L1260 78M730.1 63.6L1260 77.9M730.7 63.6L1260 77.8M731.3 63.6L1260 77.7M731.8 63.6L1260 77.6M732.4 63.6L1260 77.5M733 63.6L1260 77.5M733.5 63.6L1260 77.4M734.1 63.6L1260 77.3M735.3 63.6L1260 77.1M735.8 63.6L1260 77M736.4 63.6L1260 76.9M737 63.6L1260 76.8M737.5 63.6L1260 76.8M738.1 63.6L1260 76.7M738.7 63.6L1260 76.6M739.3 63.6L1260 76.5M739.8 63.6L1260 76.4M741 63.6L1260 76.3M741.5 63.6L1260 76.2M742.1 63.6L1260 76.1M742.7 63.6L1260 76M743.3 63.6L1260 76M743.8 63.6L1260 75.9M744.4 63.6L1260 75.8M745 63.6L1260 75.7M745.5 63.6L1260 75.7M746.7 63.6L1260 75.5M747.2 63.6L1260 75.5M747.8 63.6L1260 75.4M748.4 63.6L1260 75.3M749 63.6L1260 75.2M749.5 63.6L1260 75.2M750.1 63.6L1260 75.1M750.7 63.6L1260 75M751.2 63.6L1260 75M752.4 63.6L1260 74.8M752.9 63.6L1260 74.8M753.5 63.6L1260 74.7M754.1 63.6L1260 74.6M754.7 63.6L1260 74.6M755.2 63.6L1260 74.5M755.8 63.6L1260 74.5M756.4 63.6L1260 74.4M756.9 63.6L1260 74.3M758.1 63.6L1260 74.2M758.6 63.6L1260 74.1M759.2 63.6L1260 74.1M759.8 63.6L1260 74M760.4 63.6L1260 74M760.9 63.6L1260 73.9M761.5 63.6L1260 73.9M762.1 63.6L1260 73.8M762.6 63.6L1260 73.7M763.8 63.6L1260 73.6M764.3 63.6L1260 73.6M764.9 63.6L1260 73.5M765.5 63.6L1260 73.5M766 63.6L1260 73.4M766.6 63.6L1260 73.4M767.2 63.6L1260 73.3M767.7 63.6L1260 73.3M768.3 63.6L1260 73.2M769.5 63.6L1260 73.1M770 63.6L1260 73M770.6 63.6L1260 73M771.2 63.6L1260 72.9M771.7 63.6L1260 72.9M772.3 63.6L1260 72.8M772.9 63.6L1260 72.8M773.4 63.6L1260 72.7M774 63.5L1260 72.7M775.1 63.5L1260 72.6M775.7 63.5L1260 72.6M776.3 63.5L1260 72.5M776.8 63.5L1260 72.5M777.4 63.5L1260 72.4M778 63.5L1260 72.4M778.5 63.5L1260 72.3M779.1 63.5L1260 72.3M779.7 63.5L1260 72.2M780.8 63.5L1260 72.1M781.4 63.5L1260 72.1M782 63.5L1260 72.1M782.5 63.5L1260 72M783.1 63.5L1260 72M783.7 63.5L1260 71.9M784.2 63.5L1260 71.9M784.8 63.5L1260 71.8M785.4 63.5L1260 71.8M786.5 63.5L1260 71.7M787.1 63.5L1260 71.7M787.6 63.5L1260 71.6M788.2 63.5L1260 71.6M788.8 63.5L1260 71.6M789.3 63.5L1260 71.5M789.9 63.5L1260 71.5M790.5 63.5L1260 71.4M791 63.5L1260 71.4M792.2 63.5L1260 71.3M792.7 63.5L1260 71.3M793.3 63.5L1260 71.2M793.9 63.5L1260 71.2M794.4 63.5L1260 71.2M795 63.5L1260 71.1M795.6 63.5L1260 71.1M796.1 63.5L1260 71.1M796.7 63.5L1260 71M797.8 63.5L1260 70.9M798.4 63.5L1260 70.9M799 63.5L1260 70.9M799.5 63.5L1260 70.8M800.1 63.5L1260 70.8M800.7 63.5L1260 70.8M801.2 63.5L1260 70.7M801.8 63.5L1260 70.7M802.4 63.5L1260 70.7M803.5 63.5L1260 70.6M804.1 63.5L1260 70.6M804.6 63.5L1260 70.5M805.2 63.5L1260 70.5M805.8 63.5L1260 70.5M806.3 63.5L1260 70.4M806.9 63.5L1260 70.4M807.5 63.5L1260 70.4M808 63.5L1260 70.3M809.2 63.5L1260 70.3M809.7 63.5L1260 70.2M810.3 63.5L1260 70.2M810.8 63.5L1260 70.2M811.4 63.5L1260 70.1M812 63.5L1260 70.1M812.5 63.5L1260 70.1M813.1 63.5L1260 70.1M813.7 63.5L1260 70M814.8 63.5L1260 70M815.4 63.5L1260 69.9M815.9 63.5L1260 69.9M816.5 63.5L1260 69.9M817.1 63.5L1260 69.8M817.6 63.5L1260 69.8M818.2 63.5L1260 69.8M818.8 63.5L1260 69.8M819.3 63.5L1260 69.7M820.5 63.5L1260 69.7M821 63.5L1260 69.6M821.6 63.5L1260 69.6M822.2 63.5L1260 69.6M822.7 63.5L1260 69.6M823.3 63.5L1260 69.5M823.8 63.5L1260 69.5M824.4 63.5L1260 69.5M825 63.5L1260 69.5M826.1 63.5L1260 69.4M826.7 63.5L1260 69.4M827.2 63.5L1260 69.3M827.8 63.5L1260 69.3M828.4 63.5L1260 69.3M828.9 63.5L1260 69.3M829.5 63.5L1260 69.2M830.1 63.5L1260 69.2M830.6 63.5L1260 69.2M831.7 63.5L1260 69.1M832.3 63.5L1260 69.1M832.9 63.5L1260 69.1M833.4 63.5L1260 69.1M834 63.5L1260 69M834.6 63.5L1260 69M835.1 63.5L1260 69M835.7 63.5L1260 69M836.3 63.5L1260 68.9M837.4 63.4L1260 68.9M837.9 63.4L1260 68.9M838.5 63.4L1260 68.8M839.1 63.4L1260 68.8M839.6 63.4L1260 68.8M840.2 63.4L1260 68.8M840.8 63.4L1260 68.7M841.3 63.4L1260 68.7M841.9 63.4L1260 68.7M843 63.4L1260 68.7M843.6 63.4L1260 68.6M844.1 63.4L1260 68.6M844.7 63.4L1260 68.6M845.3 63.4L1260 68.6M845.8 63.4L1260 68.5M846.4 63.4L1260 68.5M847 63.4L1260 68.5M847.5 63.4L1260 68.5" stroke="url(#gmin)" stroke-width="1.3" fill="none"/><path d="M-5 77.3L1260 74.3M-5 77.7L1260 74.7M-5 78.1L1260 75.1M-5 78.6L1260 75.5M-5 79L1260 75.9M-5 79.5L1260 76.3M-5 80L1260 76.8M-5 80.5L1260 77.3M-5 81.1L1260 77.8M-5 81.7L1260 78.4M-5 82.3L1260 79M-5 83L1260 79.6M-5 83.7L1260 80.3M-5 84.5L1260 81M-5 85.4L1260 81.7M-5 86.3L1260 82.6M-5 87.2L1260 83.5M-5 88.3L1260 84.4M-5 89.4L1260 85.5M-5 90.6L1260 86.6M-5 92L1260 87.8M-5 93.5L1260 89.2M-5 95.1L1260 90.7M-5 96.9L1260 92.4M-5 98.9L1260 94.2M-5 101.2L1260 96.3M-5 103.7L1260 98.6M-5 106.6L1260 101.3M-5 109.9L1260 104.4M-5 113.8L1260 107.9M-5 118.3L1260 112M-5 123.6L1260 117M-5 130.1L1260 122.9M-5 138.1L1260 130.3M-5 148.2L1260 139.6M-5 161.4L1260 151.7M-5 179.2L1260 168.1M-5 204.9L1260 191.7M-5 244.8L1260 228.5M-5 315.5L1260 293.6M384 64.2L-5 69.9M390 64.2L-5 70.2M396 64.1L-5 70.4M401.9 64.1L-5 70.6M407.9 64.1L-5 70.9M413.9 64.1L-5 71.1M419.8 64.1L-5 71.4M425.8 64.1L-5 71.7M431.7 64.1L-5 72M437.7 64.1L-5 72.4M443.6 64.1L-5 72.7M449.5 64.1L-5 73.1M455.5 64L-5 73.5M461.4 64L-5 74M467.3 64L-5 74.5M473.2 64L-5 75M479.1 64L-5 75.5M485 64L-5 76.1M490.9 64L-5 76.8M496.8 64L-5 77.5M502.7 64L-5 78.3M508.6 64L-5 79.2M514.5 64L-5 80.2M520.3 63.9L-5 81.3M526.2 63.9L-5 82.5M532.1 63.9L-5 83.9M538 63.9L-5 85.5M543.8 63.9L-5 87.3M549.7 63.9L-5 89.4M555.5 63.9L-5 91.9M561.4 63.9L-5 94.9M567.2 63.9L-5 98.6M573 63.9L-5 103.2M578.9 63.9L-5 109M584.7 63.8L-5 116.8M590.5 63.8L-5 127.6M596.3 63.8L-5 143.6M602.2 63.8L-5 169.9M608 63.8L-5 221.1M613.8 63.8L-5 363.8M625.4 63.8L1260 452.4M631.2 63.8L1260 243.7M637 63.8L1260 179.9M642.7 63.8L1260 148.9M648.5 63.7L1260 130.7M654.3 63.7L1260 118.6M660.1 63.7L1260 110.1M665.8 63.7L1260 103.7M671.6 63.7L1260 98.7M677.4 63.7L1260 94.8M683.1 63.7L1260 91.6M688.9 63.7L1260 88.9M694.6 63.7L1260 86.6M700.3 63.7L1260 84.7M706.1 63.7L1260 83M711.8 63.6L1260 81.6M717.5 63.6L1260 80.3M723.3 63.6L1260 79.1M729 63.6L1260 78.1M734.7 63.6L1260 77.2M740.4 63.6L1260 76.4M746.1 63.6L1260 75.6M751.8 63.6L1260 74.9M757.5 63.6L1260 74.3M763.2 63.6L1260 73.7M768.9 63.6L1260 73.2M774.6 63.5L1260 72.7M780.2 63.5L1260 72.2M785.9 63.5L1260 71.8M791.6 63.5L1260 71.4M797.3 63.5L1260 71M802.9 63.5L1260 70.6M808.6 63.5L1260 70.3M814.2 63.5L1260 70M819.9 63.5L1260 69.7M825.5 63.5L1260 69.4M831.2 63.5L1260 69.2M836.8 63.5L1260 68.9M842.5 63.4L1260 68.7" stroke="url(#gmaj)" stroke-width="1.3" fill="none"/></g></defs><g id="grid"><use href="#gl"/><defs><linearGradient id="gred" gradientUnits="userSpaceOnUse" x1="0" y1="40" x2="0" y2="800"><stop offset="0.000" stop-color="#b03a4a" stop-opacity="0.000"/><stop offset="0.026" stop-color="#b03a4a" stop-opacity="0.000"/><stop offset="0.053" stop-color="#b03a4a" stop-opacity="0.000"/><stop offset="0.079" stop-color="#b03a4a" stop-opacity="0.075"/><stop offset="0.105" stop-color="#b03a4a" stop-opacity="0.484"/><stop offset="0.132" stop-color="#b03a4a" stop-opacity="0.552"/><stop offset="0.158" stop-color="#b03a4a" stop-opacity="0.620"/><stop offset="0.184" stop-color="#b03a4a" stop-opacity="0.646"/><stop offset="0.211" stop-color="#b03a4a" stop-opacity="0.672"/><stop offset="0.237" stop-color="#b03a4a" stop-opacity="0.698"/><stop offset="0.263" stop-color="#b03a4a" stop-opacity="0.724"/><stop offset="0.289" stop-color="#b03a4a" stop-opacity="0.750"/><stop offset="0.316" stop-color="#b03a4a" stop-opacity="0.764"/><stop offset="0.342" stop-color="#b03a4a" stop-opacity="0.779"/><stop offset="0.368" stop-color="#b03a4a" stop-opacity="0.793"/><stop offset="0.395" stop-color="#b03a4a" stop-opacity="0.807"/><stop offset="0.421" stop-color="#b03a4a" stop-opacity="0.821"/><stop offset="0.447" stop-color="#b03a4a" stop-opacity="0.836"/><stop offset="0.474" stop-color="#b03a4a" stop-opacity="0.850"/><stop offset="0.500" stop-color="#b03a4a" stop-opacity="0.860"/><stop offset="0.526" stop-color="#b03a4a" stop-opacity="0.870"/><stop offset="0.553" stop-color="#b03a4a" stop-opacity="0.880"/><stop offset="0.579" stop-color="#b03a4a" stop-opacity="0.890"/><stop offset="0.605" stop-color="#b03a4a" stop-opacity="0.900"/><stop offset="0.632" stop-color="#b03a4a" stop-opacity="0.910"/><stop offset="0.658" stop-color="#b03a4a" stop-opacity="0.920"/><stop offset="0.684" stop-color="#b03a4a" stop-opacity="0.930"/><stop offset="0.711" stop-color="#b03a4a" stop-opacity="0.940"/><stop offset="0.737" stop-color="#b03a4a" stop-opacity="0.950"/><stop offset="0.763" stop-color="#b03a4a" stop-opacity="0.955"/><stop offset="0.789" stop-color="#b03a4a" stop-opacity="0.960"/><stop offset="0.816" stop-color="#b03a4a" stop-opacity="0.965"/><stop offset="0.842" stop-color="#b03a4a" stop-opacity="0.970"/><stop offset="0.868" stop-color="#b03a4a" stop-opacity="0.975"/><stop offset="0.895" stop-color="#b03a4a" stop-opacity="0.980"/><stop offset="0.921" stop-color="#b03a4a" stop-opacity="0.985"/><stop offset="0.947" stop-color="#b03a4a" stop-opacity="0.990"/><stop offset="0.974" stop-color="#b03a4a" stop-opacity="0.995"/></linearGradient></defs><path d="M610.8 103.7L-144.1 3543.5" stroke="url(#gred)" stroke-width="1.4" fill="none"/><path d="M-3154.3 561.5L3989.4 365.9" stroke="#66932c" stroke-width="1.7" fill="none"/></g><defs><g id="grid2"><use href="#gl"/><path d="M532.5 460.5L-144.1 3543.5" stroke="#7a3a38" stroke-opacity="0.8" stroke-width="1.3" fill="none"/></g></defs><defs><g id="grid3"><use href="#gl"/></g></defs><polygon points="462.2,372 714.1,295.2 608.5,556.8 452.4,562 440.9,414.7" fill="#b9876f" stroke="#b9876f" stroke-width="0.5" stroke-linejoin="round" /><polygon points="462.2,372 714.1,295.2 440.9,414.7" fill="#ae8473" stroke="#ae8473" stroke-width="0.5" stroke-linejoin="round" /><polygon points="729.1,366.2 866.8,362.9 899.6,404 892.1,547 782.3,755 728.6,494.4" fill="#bfbebd" stroke="#bfbebd" stroke-width="0.5" stroke-linejoin="round" /><polygon points="729.1,366.2 744.3,407.6 782.3,755 728.6,494.4" fill="#c3c3c3" stroke="#c3c3c3" stroke-width="0.5" stroke-linejoin="round" /><polygon points="744.3,407.6 899.6,404 892.1,547 782.3,755" fill="#bfbebd" stroke="#bfbebd" stroke-width="0.5" stroke-linejoin="round" /><polygon points="729.1,366.2 866.8,362.9 899.6,404 744.3,407.6" fill="#b5b9bd" stroke="#b5b9bd" stroke-width="0.5" stroke-linejoin="round" /><polygon points="956.1,361.4 1088.8,358.4 1150.9,398 1132.4,538.7 1027.5,742.8 947.3,488.8" fill="#bab9b8" stroke="#bab9b8" stroke-width="0.5" stroke-linejoin="round" /><polygon points="956.1,361.4 1001,401.6 1027.5,742.8 947.3,488.8" fill="#b9b9b9" stroke="#b9b9b9" stroke-width="0.5" stroke-linejoin="round" /><polygon points="1001,401.6 1150.9,398 1132.4,538.7 1027.5,742.8" fill="#bcbbba" stroke="#bcbbba" stroke-width="0.5" stroke-linejoin="round" /><polygon points="956.1,361.4 1088.8,358.4 1150.9,398 1001,401.6" fill="#b4b8bc" stroke="#b4b8bc" stroke-width="0.5" stroke-linejoin="round" /><g clip-path="url(#cOr)"><use href="#grid2" clip-path="url(#gOr)"/></g><g clip-path="url(#cMid)"><use href="#grid3" clip-path="url(#gMidA)"/><use href="#grid3" clip-path="url(#gMidB)"/></g><g clip-path="url(#cR)"><use href="#grid3" clip-path="url(#gRA)"/><use href="#grid3" clip-path="url(#gRB)"/><use href="#grid3" clip-path="url(#gRC)"/><use href="#grid3" clip-path="url(#gRD)"/></g><path d="M729.5 454.7L744 454.3" stroke="#6a9a2a" stroke-width="1.5" stroke-dasharray="2 1.6"/><path d="M950 449.2L961 448.9" stroke="#6a9a2a" stroke-width="1.5" stroke-dasharray="2 1.6"/><path d="M961 448.9L981 448.3" stroke="#8a8a8a" stroke-width="1.3" stroke-dasharray="2 1.2"/><path d="M956.1 361.4L1088.8 358.4" stroke="#151515" stroke-width="1.0" fill="none"/><path d="M1088.8 358.4L1150.9 398" stroke="#151515" stroke-width="1.0" fill="none"/><path d="M1150.9 398L1001 401.6" stroke="#151515" stroke-width="1.0" fill="none"/><path d="M1001 401.6L956.1 361.4" stroke="#151515" stroke-width="1.0" fill="none"/><path d="M956.1 361.4L947.3 488.8" stroke="#151515" stroke-width="1.0" fill="none"/><path d="M1150.9 398L1132.4 538.7" stroke="#151515" stroke-width="1.0" fill="none"/><defs><linearGradient id="eg0" gradientUnits="userSpaceOnUse" x1="1001" y1="401.6" x2="1027.5" y2="742.8"><stop offset="0" stop-color="#222"/><stop offset="1" stop-color="#ff9a20"/></linearGradient><linearGradient id="eg1" gradientUnits="userSpaceOnUse" x1="947.3" y1="488.8" x2="1027.5" y2="742.8"><stop offset="0" stop-color="#222"/><stop offset="1" stop-color="#ff9a20"/></linearGradient><linearGradient id="eg2" gradientUnits="userSpaceOnUse" x1="1132.4" y1="538.7" x2="1027.5" y2="742.8"><stop offset="0" stop-color="#222"/><stop offset="1" stop-color="#ff9a20"/></linearGradient></defs><path d="M1001 401.6L1027.5 742.8" stroke="url(#eg0)" stroke-width="1.1" fill="none"/><path d="M947.3 488.8L1027.5 742.8" stroke="url(#eg1)" stroke-width="1.1" fill="none"/><path d="M1132.4 538.7L1027.5 742.8" stroke="url(#eg2)" stroke-width="1.1" fill="none"/><rect x="954.1" y="359.4" width="4" height="4" rx="1.5" fill="#000"/><rect x="1086.8" y="356.4" width="4" height="4" rx="1.5" fill="#000"/><rect x="1148.9" y="396" width="4" height="4" rx="1.5" fill="#000"/><rect x="999" y="399.6" width="4" height="4" rx="1.5" fill="#000"/><rect x="945.3" y="486.8" width="4" height="4" rx="1.5" fill="#000"/><rect x="1130.4" y="536.7" width="4" height="4" rx="1.5" fill="#000"/><rect x="1025" y="740.3" width="5" height="5" rx="1.5" fill="#fff"/><circle cx="1040.9" cy="447.1" r="2.6" fill="#f0a050" stroke="#222" stroke-width="0.6"/><g transform="translate(532.3,461.3)"><circle r="11.3" fill="none" stroke="#f4f4f4" stroke-width="1.6" stroke-dasharray="5.9 3"/><circle r="11.3" fill="none" stroke="#b02a30" stroke-width="1.6" stroke-dasharray="3 5.9" stroke-dashoffset="3"/><path d="M-25.5 0.9H-11M13 -0.9H26M-0.9 -24V-12M0.9 12V23" stroke="#111" stroke-width="1.1"/><path d="M-11 0.9H-5.5M7 -0.9H12M-0.9 -11V-6M0.9 6V11" stroke="#333" stroke-width="0.9"/></g></svg><div id="hdr"></div>
<div id="tp"></div>
<svg id="hsvg" width="1255" height="64" viewBox="0 0 1255 64" style="position:absolute;left:0;top:0">
 <g fill="none" stroke-linecap="round" stroke-linejoin="round">
 <!-- emboss lines -->
 <g fill="#454545" stroke="none">
  <rect x="0" y="24" width="97" height="1.6" rx="1"/>
  <rect x="105" y="24" width="73" height="1.6" rx="1"/>
  <rect x="617.4" y="24" width="95" height="1.6" rx="1"/>
  <rect x="720.3" y="24" width="37.4" height="1.6" rx="1"/>
  <rect x="766.2" y="24" width="62.5" height="1.6" rx="1"/>
  <rect x="837.3" y="24" width="62.5" height="1.6" rx="1"/>
  <rect x="1148.5" y="24" width="37.1" height="1.6" rx="1"/>
  <rect x="1193.9" y="24" width="47.9" height="1.6" rx="1"/>
  <rect x="0" y="56" width="52" height="1.6" rx="1"/>
 </g>
 <!-- Edit mode dropdown -->
 <rect x="-6" y="2" width="103" height="22.6" rx="4" fill="#282828"/>
 <rect x="-1" y="4.9" width="4" height="6.1" fill="#e8e8e8"/>
 <rect x="-1" y="12.3" width="3" height="9.7" rx="1" fill="#8a8a8a"/>
 <path d="M85.8 12.5L89.7 16.5L93.7 12.3" stroke="#e6e6e6" stroke-width="1.3"/>
 <!-- select mode group -->
 <path d="M107.5 2H128V24.9H107.5L105.1 22.5V4.4Z" fill="#4772b3"/>
 <rect x="129" y="2" width="23.9" height="22.9" fill="#545454"/>
 <path d="M153.9 2H174.2Q177.7 2 177.7 5.5V21.4Q177.7 24.9 174.2 24.9H153.9Z" fill="#545454"/>
 <path d="M110.4 7.6L113 5.3H124.5V17.3L121.2 20.5H109.3V16.4" stroke="#dcdcdc" stroke-width="1.1" stroke-linecap="butt"/>
 <rect x="107.9" y="10.1" width="4.9" height="4.8" fill="#eeeeee"/>
 <path d="M139.8 20.5H134.2V8.1L137.1 5.2H149.5V16.6L146.3 19.7" stroke="#b0b0b0" stroke-width="1.1" stroke-linecap="butt"/>
 <rect x="141" y="10.2" width="4" height="11.6" fill="#eeeeee"/>
 <path d="M160.1 7.9L162.4 5.2H174.8V16.6L171.3 19.5" stroke="#b0b0b0" stroke-width="1.1" stroke-linecap="butt"/>
 <rect x="157.2" y="10.15" width="12.7" height="11.6" fill="#e6e6e6"/>
 <!-- Global dropdown -->
 <rect x="617.4" y="2" width="94.7" height="22.5" rx="4" fill="#282828"/>
 <path d="M625.4 17.7V5.6M622.3 8.3L625.4 5.3L628.4 8.3M627.9 18.7H639.4M636.6 16.3L639.6 19.1L636.6 21.8" stroke="#e8e8e8" stroke-width="1.2"/>
 <path d="M627.8 16.4L635.3 8.9M631.6 8.8H635.5V12.9" stroke="#a8a8a8" stroke-width="1.2"/>
 <circle cx="625.9" cy="18.6" r="1.9" stroke="#e8e8e8" stroke-width="1.2" fill="#282828"/>
 <path d="M700.6 12.5L704.5 16.5L708.5 12.3" stroke="#e6e6e6" stroke-width="1.3"/>
 <!-- pivot -->
 <rect x="720.3" y="2" width="37.3" height="22.6" rx="4" fill="#282828"/>
 <path d="M732.6 11.6A5.2 5.2 0 1 0 736.0 15.6" stroke="#e6e6e6" stroke-width="1.2"/>
 <path d="M732.2 11.0A5.2 5.2 0 1 1 738.9 15.2" stroke="#e6e6e6" stroke-width="1.2"/>
 <circle cx="734.6" cy="12.9" r="1.8" fill="#e6e6e6"/>
 <path d="M747 12.4L750.6 16.6L754.6 12.4" stroke="#e6e6e6" stroke-width="1.3"/>
 <!-- snapping -->
 <rect x="766.2" y="2.1" width="62.5" height="22.8" rx="4" fill="#282828"/>
 <path d="M770.2 2.1H789.5V24.9H770.2Q766.2 24.9 766.2 20.9V6.1Q766.2 2.1 770.2 2.1Z" fill="#545454"/>
 <path d="M769.3 11.3L775.4 5.3Q779.6 3.8 783.6 6.8Q787.3 10.8 785.6 15.3L779.4 21.8L776.6 19.2L782.6 13.3Q783.9 10.6 781.6 8.6Q779.6 6.9 777.3 7.9L771.9 13.7Z" stroke="#c8c8c8" stroke-width="1.1"/>
 <path d="M794.3 12.2V20.9M809 12.2V20.9M801.4 13.6V20.9M794.3 16.8H809M797.3 15.2V18.4M805.4 15.2V18.4" stroke="#c4c4c4" stroke-width="1.4" stroke-linecap="butt"/>
 <rect x="806" y="5.1" width="4.9" height="4.7" fill="#ececec"/>
 <path d="M817.6 12.7L821.7 16.8L825.8 12.7" stroke="#e6e6e6" stroke-width="1.3"/>
 <!-- proportional -->
 <rect x="837.3" y="2.1" width="62.5" height="22.8" rx="4" fill="#282828"/>
 <path d="M841.3 2.1H860V24.9H841.3Q837.3 24.9 837.3 20.9V6.1Q837.3 2.1 841.3 2.1Z" fill="#545454"/>
 <circle cx="848.4" cy="13.5" r="8.2" stroke="#8e8e8e" stroke-width="1"/>
 <circle cx="848.4" cy="13.5" r="2.6" fill="#d8d8d8"/>
 <path d="M866.2 20.6Q869.8 20.6 871.6 14.3Q873.3 6.2 874.9 6.2Q876.5 6.2 878.2 14.3Q880 20.6 883.6 20.6" stroke="#c8c8c8" stroke-width="1.2"/>
 <path d="M888.7 12.5L892.5 16.5L896.3 12.5" stroke="#6e6e6e" stroke-width="1.2"/>
 <!-- visibility -->
 <rect x="1148.5" y="2.1" width="37.1" height="22.6" rx="4" fill="#282828"/>
 <path d="M1154.5 9.1Q1161.3 1.6 1168.1 9.1Q1161.3 16.6 1154.5 9.1Z" fill="#ececec"/>
 <circle cx="1161.2" cy="9" r="2.6" stroke="#282828" stroke-width="1.1" fill="#ececec"/>
 <path d="M1150.9 12L1160.8 16.4L1157.3 17.8L1155.2 21.9Z" fill="#ececec"/>
 <path d="M1175 12.4L1178.6 16.8L1182.7 12.4" stroke="#e6e6e6" stroke-width="1.3"/>
 <!-- gizmo -->
 <path d="M1217.2 2.1H1237.8Q1241.8 2.1 1241.8 6.1V20.9Q1241.8 24.9 1237.8 24.9H1217.2Z" fill="#282828"/>
 <path d="M1196.3 2.1H1217.2V24.9H1196.3L1193.9 22.5V4.5Z" fill="#4772b3"/>
 <path d="M1197.3 7.8Q1208.5 8.5 1211.2 21.3" stroke="#ededed" stroke-width="1.3"/>
 <path d="M1209.2 9.6L1213.4 5.4M1208.3 5.2H1213.6V10.7" stroke="#ededed" stroke-width="1.3"/>
 <path d="M1205 13.7L1201 17.7" stroke="#ededed" stroke-width="1.2"/>
 <circle cx="1199.3" cy="19.6" r="2.1" stroke="#ededed" stroke-width="1.2"/>
 <path d="M1226 12.4L1229.6 16.6L1233.5 12.4" stroke="#e6e6e6" stroke-width="1.3"/>
 <path d="M1252.5 2.1H1260V24.9H1252.5L1250.1 22.5V4.5Z" fill="#4772b3"/>
 <path d="M1254 11Q1253 14 1254 17" stroke="#ededed" stroke-width="1.2"/>
 <!-- tool panel buttons -->
 <path d="M62.8 31H67Q62.8 31 62.8 35.2Z" fill="#373737" stroke="none"/>
 <rect x="-2" y="34" width="5.8" height="23" fill="#545454"/>
 <rect x="0" y="36.9" width="1" height="12.1" fill="#d0d0d0"/>
 <rect x="5.1" y="34" width="22.8" height="23" fill="#545454"/>
 <path d="M29 34H47.8Q51.8 34 51.8 38V53Q51.8 57 47.8 57H29Z" fill="#545454"/>
 <path d="M13.2 36.9H25V49H20.1V53.9H8V42.1H13.2ZM13.2 42.1V49H20.1V42.1Z" fill="#c8c8c8" fill-rule="evenodd"/>
 <path d="M37.7 39.9V37.7H39.9M42 37.7H44.2M46.4 37.7H48.3V39.9M48.3 41.9V44.1M48.3 46.4V48.3H46.4M32.7 44.6V42.7H34.6M32.7 46.8V49.1M32.7 51.4V53.1H34.5M36.8 53.1H39.1M41.4 53.1H43.3V51.3" stroke="#e4e4e4" stroke-width="1.5" stroke-linecap="butt" stroke-linejoin="miter"/>
 <rect x="37" y="42.1" width="7" height="6.9" fill="#c8c8c8"/>
 </g>
</svg>
<div class="t" style="left:11.8px;top:5.8px;">Edit Mode</div>
<div class="t" style="left:193.6px;top:5.8px;">View</div>
<div class="t" style="left:243.4px;top:5.8px;">Select</div>
<div class="t" style="left:304.6px;top:5.8px;">Add</div>
<div class="t" style="left:348.4px;top:5.8px;">Mesh</div>
<div class="t" style="left:402.6px;top:5.8px;">Vertex</div>
<div class="t" style="left:464.6px;top:5.8px;">Edge</div>
<div class="t" style="left:515.6px;top:5.8px;">Face</div>
<div class="t" style="left:566.8px;top:5.8px;">UV</div>
<div class="t" style="left:649px;top:5.8px;">Global</div>
<div class="ovl t" style="left:3.6px;top:73.5px;">User Perspective</div>
<div class="ovl t" style="left:3.6px;top:95.5px;letter-spacing:0.15px;">(1) Cube.002</div>
</body></html>
